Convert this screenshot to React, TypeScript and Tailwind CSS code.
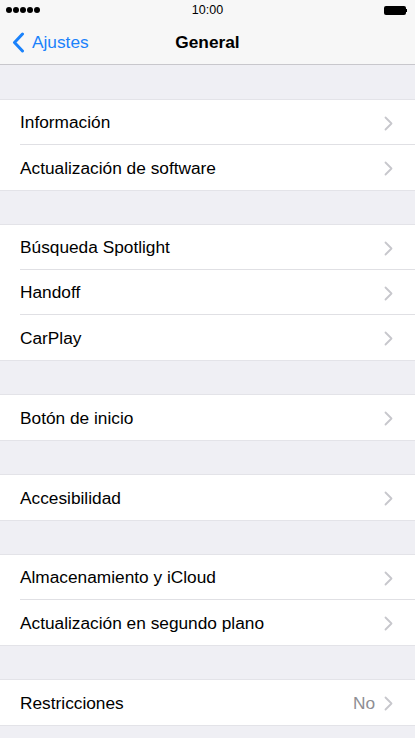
import React from "react";

const Chevron = () => (
  <svg width="9" height="15" viewBox="0 0 9 15" className="shrink-0">
    <path d="M1.5 1.5l6 6-6 6" fill="none" stroke="#c7c7cc" strokeWidth="1.8" strokeLinecap="round" strokeLinejoin="round" />
  </svg>
);

type RowT = { label: string; value?: string };

const Group = ({ rows }: { rows: RowT[] }) => (
  <div className="bg-white">
    {rows.map((r, i) => (
      <div key={r.label} className="pl-5">
        <div className={`h-[45px] flex items-center pr-[22px] pt-[2px] ${i < rows.length - 1 ? "border-b border-[#e0e0e4]" : ""}`}>
          <span className="flex-1 text-[17.3px] text-black">{r.label}</span>
          {r.value && <span className="text-[17.3px] text-[#8e8e93] mr-[9px]">{r.value}</span>}
          <Chevron />
        </div>
      </div>
    ))}
  </div>
);

const Gap = () => <div className="h-[35px] border-y border-[#e3e3e8] bg-[#efeff4]" />;

export default function App() {
  return (
    <div className="w-[415px] h-[738px] overflow-hidden bg-[#efeff4]" style={{ fontFamily: "'Liberation Sans', Arial, sans-serif" }}>
      <div className="bg-[#f7f7f7] border-b border-[#c8c7cc] h-[65px]">
        <div className="h-[20px] flex items-center justify-between px-[6px] relative">
          <div className="flex gap-[1px]">
            {[0, 1, 2, 3, 4].map((i) => (
              <div key={i} className="w-[6px] h-[6px] rounded-full bg-black" />
            ))}
          </div>
          <div className="absolute left-0 right-0 text-center text-[12.5px] font-medium text-black">10:00</div>
          <div className="flex items-center mr-[2px]">
            <div className="w-[22px] h-[9px] bg-black rounded-[2px]" />
            <div className="w-[1.5px] h-[3px] bg-black" />
          </div>
        </div>
        <div className="h-[44px] flex items-center relative pt-[1px]">
          <div className="flex items-center pl-[12px] text-[#1a82fb] text-[17.3px]">
            <svg width="13" height="21" viewBox="0 0 13 21" className="mr-[7px]">
              <path d="M10.5 2L2.5 10.5l8 8.5" fill="none" stroke="#1a82fb" strokeWidth="3" strokeLinecap="round" strokeLinejoin="round" />
            </svg>
            Ajustes
          </div>
          <div className="absolute left-0 right-0 text-center text-[17.3px] font-semibold text-black pointer-events-none">General</div>
        </div>
      </div>
      <div className="h-[35px] border-b border-[#e3e3e8]" />
      <Group rows={[{ label: "Información" }, { label: "Actualización de software" }]} />
      <Gap />
      <Group rows={[{ label: "Búsqueda Spotlight" }, { label: "Handoff" }, { label: "CarPlay" }]} />
      <Gap />
      <Group rows={[{ label: "Botón de inicio" }]} />
      <Gap />
      <Group rows={[{ label: "Accesibilidad" }]} />
      <Gap />
      <Group rows={[{ label: "Almacenamiento y iCloud" }, { label: "Actualización en segundo plano" }]} />
      <Gap />
      <Group rows={[{ label: "Restricciones", value: "No" }]} />
      <div className="h-[13px] border-t border-[#e3e3e8]" />
    </div>
  );
}
